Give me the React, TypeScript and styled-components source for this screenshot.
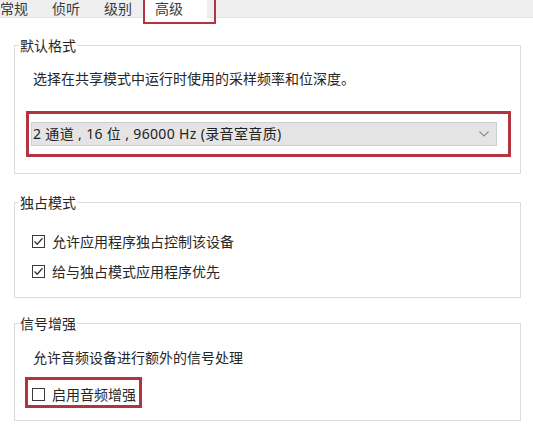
import React from "react";
import styled, { createGlobalStyle } from "styled-components";

const GlobalStyle = createGlobalStyle`
  html, body { margin: 0; padding: 0; background: #ffffff; }
  body {
    font-family: "Noto Sans CJK SC", "Noto Sans", sans-serif;
    font-size: 14px;
    color: #262626;
  }
`;

const RED = "#b3343e";

const Page = styled.div`
  width: 533px;
  height: 424px;
  overflow: hidden;
  background: #ffffff;
  display: flex;
  flex-direction: column;
`;

const TabStrip = styled.div`
  height: 17px;
  flex-shrink: 0;
  background: #efefef;
  border-bottom: 1px solid #e2e2e2;
  display: flex;
  align-items: flex-start;
`;

const Tab = styled.div<{ $first?: boolean }>`
  padding: 0 12px 0 ${(p) => (p.$first ? 0 : 12)}px;
  height: 17px;
  line-height: 17px;
  color: #3a3a3a;
  white-space: nowrap;
`;

const SelectedFrame = styled.div`
  margin-left: -1px;
  width: 69px;
  height: 22px;
  border: 2px solid ${RED};
  border-top: none;
  position: relative;
  z-index: 1;
`;

const SelectedTab = styled.div`
  width: 62px;
  height: 20px;
  box-sizing: border-box;
  padding-left: 10px;
  background: #ffffff;
  line-height: 17px;
  color: #3a3a3a;
`;

const Content = styled.div`
  padding: 17px 12px 0 14px;
  display: flex;
  flex-direction: column;
`;

const Group = styled.fieldset<{ $top: number; $bottom: number }>`
  margin: ${(p) => p.$top}px 0 0;
  padding: 0 0 ${(p) => p.$bottom}px;
  border: 1px solid #dcdcdc;
  min-width: 0;
  display: flex;
  flex-direction: column;
  align-items: stretch;
`;

const Legend = styled.legend`
  margin-left: 4px;
  padding: 0 1px;
  line-height: 20px;
  font-size: 14px;
  color: #262626;
`;

const Description = styled.div<{ $top: number }>`
  margin: ${(p) => p.$top}px 0 0 18px;
  line-height: 20px;
  color: #262626;
`;

const ComboFrame = styled.div`
  margin: 23px 9px 0 11px;
  border: 3px solid ${RED};
  padding: 8px 11px 8px 2px;
`;

const Combo = styled.div`
  height: 24px;
  box-sizing: border-box;
  background: #e4e4e4;
  border: 1px solid #cfcfcf;
  display: flex;
  align-items: center;
  justify-content: space-between;
  padding: 0 7px 0 1px;
  line-height: 20px;
  font-family: "Noto Sans", "Noto Sans CJK SC", sans-serif;
  letter-spacing: 0.35px;
  color: #222222;
`;

const Chevron = styled.svg`
  width: 10px;
  height: 6px;
  flex-shrink: 0;
`;

const CheckRow = styled.label<{ $top: number; $left: number }>`
  margin: ${(p) => p.$top}px 0 0 ${(p) => p.$left}px;
  display: flex;
  align-items: center;
  gap: 7px;
  height: 20px;
  line-height: 20px;
  color: #262626;
`;

const Box = styled.span`
  width: 13px;
  height: 13px;
  box-sizing: border-box;
  border: 1px solid #3a3a3a;
  background: #ffffff;
  display: flex;
  align-items: center;
  justify-content: center;
  flex-shrink: 0;
`;

const EnhanceFrame = styled.div`
  align-self: flex-start;
  margin: 10px 0 0 10px;
  border: 3px solid ${RED};
  padding: 4px 3px 1px 0;
`;

const Check = () => (
  <svg width="11" height="11" viewBox="0 0 11 11">
    <polyline points="1.5,5.5 4.2,8.3 9.5,2.2" fill="none" stroke="#333" strokeWidth="1.3" />
  </svg>
);

type CheckboxProps = { checked: boolean; label: string; top: number; left: number };

const Checkbox = ({ checked, label, top, left }: CheckboxProps) => (
  <CheckRow $top={top} $left={left}>
    <Box>{checked ? <Check /> : null}</Box>
    <span>{label}</span>
  </CheckRow>
);

export default function App() {
  return (
    <>
      <GlobalStyle />
      <Page>
        <TabStrip>
          <Tab $first>常规</Tab>
          <Tab>侦听</Tab>
          <Tab>级别</Tab>
          <SelectedFrame>
            <SelectedTab>高级</SelectedTab>
          </SelectedFrame>
        </TabStrip>
        <Content>
          <Group $top={0} $bottom={16}>
            <Legend>默认格式</Legend>
            <Description $top={13}>选择在共享模式中运行时使用的采样频率和位深度。</Description>
            <ComboFrame>
              <Combo>
                <span>2 通道 , 16 位 , 96000 Hz (录音室音质)</span>
                <Chevron viewBox="0 0 10 6">
                  <polyline points="0.5,0.5 5,5 9.5,0.5" fill="none" stroke="#8a8a8a" strokeWidth="1.1" />
                </Chevron>
              </Combo>
            </ComboFrame>
          </Group>

          <Group $top={18} $bottom={16}>
            <Legend>独占模式</Legend>
            <Checkbox checked label="允许应用程序独占控制该设备" top={19} left={17} />
            <Checkbox checked label="给与独占模式应用程序优先" top={10} left={17} />
          </Group>

          <Group $top={15} $bottom={12}>
            <Legend>信号增强</Legend>
            <Description $top={14}>允许音频设备进行额外的信号处理</Description>
            <EnhanceFrame>
              <Checkbox checked={false} label="启用音频增强" top={0} left={4} />
            </EnhanceFrame>
          </Group>
        </Content>
      </Page>
    </>
  );
}
